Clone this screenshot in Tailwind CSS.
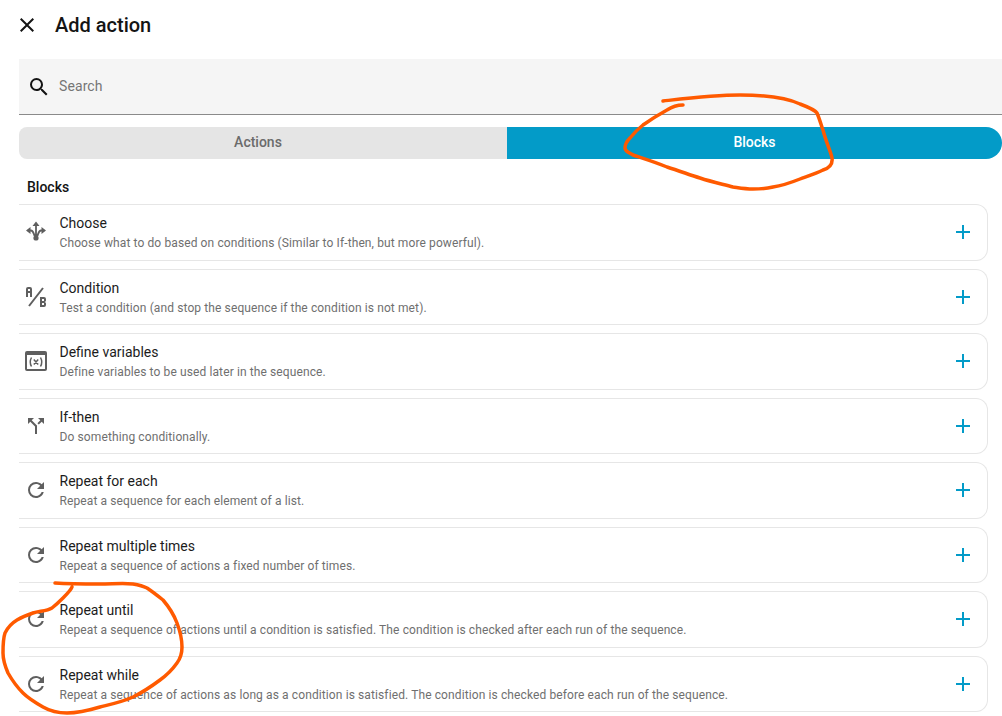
<!DOCTYPE html>
<html>

<head>
    <meta charset="UTF-8" />
    <title>Add action</title>
    <script src="https://cdn.jsdelivr.net/npm/@tailwindcss/browser@4"></script>
</head>

<body class="bg-white font-['Roboto',sans-serif] overflow-hidden">
    <div class="relative w-[1002px] h-[716px] overflow-hidden">
        <!-- header -->
        <div class="flex items-center h-[49px] pl-[15px]">
            <svg class="w-6 h-6 text-[#141414]" viewBox="0 0 24 24" fill="currentColor"><path d="M19,6.41L17.59,5L12,10.59L6.41,5L5,6.41L10.59,12L5,17.59L6.41,19L12,13.41L17.59,19L19,17.59L13.41,12L19,6.41Z" /></svg>
            <h1 class="ml-4 text-[20px] font-medium text-[#141414]">Add action</h1>
        </div>

        <div class="pl-[19px]">
            <!-- search -->
            <div class="flex items-center h-[56px] mt-[10px] bg-[#f5f5f5] border-b border-[#8a8a8a] pl-2">
                <svg class="w-6 h-6 text-[#141414]" viewBox="0 0 24 24" fill="currentColor"><path d="M9.5,3A6.5,6.5 0 0,1 16,9.5C16,11.11 15.41,12.59 14.44,13.73L14.71,14H15.5L20.5,19L19,20.5L14,15.5V14.71L13.73,14.44C12.59,15.41 11.11,16 9.5,16A6.5,6.5 0 0,1 3,9.5A6.5,6.5 0 0,1 9.5,3M9.5,5C7,5 5,7 5,9.5C5,12 7,14 9.5,14C12,14 14,12 14,9.5C14,7 12,5 9.5,5Z" /></svg>
                <span class="ml-2 mb-[2px] text-sm tracking-[0.1px] text-[#757575]">Search</span>
            </div>

            <!-- tabs -->
            <div class="flex h-8 mt-3 text-sm font-medium">
                <div class="w-[488px] flex items-center justify-center pb-[2px] pr-[10px] bg-[#e5e5e5] text-[#6b6b6b] rounded-l-lg">Actions</div>
                <div class="flex-1 flex items-center justify-center pb-[2px] bg-[#039bc8] text-white rounded-r-2xl">Blocks</div>
            </div>

            <h2 class="mt-[20px] ml-2 h-[17px] leading-[17px] text-sm font-medium text-[#141414]">Blocks</h2>

            <!-- rows -->
            <div class="mt-[8px] w-[969px] flex flex-col gap-2">
                <div class="flex items-center h-[56.5px] border-y border-r border-[#e6e6e6] rounded-r-xl">
                    <svg class="w-6 h-6 ml-[5px] text-[#5f5f5f]" viewBox="0 0 24 24" fill="currentColor"><path d="M12 1.5L15.5 6H8.5ZM2 10.5L6.5 7V14ZM22 10.5L17.5 7V14Z" /><circle cx="12" cy="18" r="2.6" /><path d="M12 5V16M5 10.5H7C9.5 10.5 9.5 14 11 16.5M19 10.5H17C14.5 10.5 14.5 14 13 16.5" fill="none" stroke="currentColor" stroke-width="1.8" /></svg>
                    <div class="ml-[11.5px] flex-1">
                        <div class="text-sm leading-5 text-[#1c1c1c]">Choose</div>
                        <div class="mt-[2px] text-xs leading-4 tracking-[0.11px] text-[#6f6f6f]">Choose what to do based on conditions (Similar to If-then, but more powerful).</div>
                    </div>
                    <svg class="w-6 h-6 mr-3 text-[#039bc8]" viewBox="0 0 24 24" fill="currentColor"><path d="M19,13H13V19H11V13H5V11H11V5H13V11H19V13Z" /></svg>
                </div>
                <div class="flex items-center h-[56.5px] border-y border-r border-[#e6e6e6] rounded-r-xl">
                    <svg class="w-6 h-6 ml-[5px] text-[#5f5f5f]" viewBox="0 0 24 24" fill="currentColor"><path d="M4 2A2 2 0 0 0 2 4V12H4V8H6V12H8V4A2 2 0 0 0 6 2H4M4 4H6V6H4M22 15.5V14A2 2 0 0 0 20 12H16V22H20A2 2 0 0 0 22 20V18.5A1.54 1.54 0 0 0 20.5 17A1.54 1.54 0 0 0 22 15.5M20 20H18V18H20V20M20 16H18V14H20M5.79 21.61L4.21 20.39L18.21 2.39L19.79 3.61Z" /></svg>
                    <div class="ml-[11.5px] flex-1">
                        <div class="text-sm leading-5 text-[#1c1c1c]">Condition</div>
                        <div class="mt-[2px] text-xs leading-4 tracking-[0.11px] text-[#6f6f6f]">Test a condition (and stop the sequence if the condition is not met).</div>
                    </div>
                    <svg class="w-6 h-6 mr-3 text-[#039bc8]" viewBox="0 0 24 24" fill="currentColor"><path d="M19,13H13V19H11V13H5V11H11V5H13V11H19V13Z" /></svg>
                </div>
                <div class="flex items-center h-[56.5px] border-y border-r border-[#e6e6e6] rounded-r-xl">
                    <svg class="w-6 h-6 ml-[5px] text-[#5f5f5f]" viewBox="0 0 24 24" fill="currentColor"><path fill-rule="evenodd" d="M3 2H21A2 2 0 0 1 23 4V20A2 2 0 0 1 21 22H3A2 2 0 0 1 1 20V4A2 2 0 0 1 3 2M3 6V20H21V6Z" /><path d="M7.5 8.5Q5 13 7.5 17.5M16.5 8.5Q19 13 16.5 17.5M9.8 10.5L14.2 15.5M14.2 10.5L9.8 15.5" fill="none" stroke="currentColor" stroke-width="1.5" /></svg>
                    <div class="ml-[11.5px] flex-1">
                        <div class="text-sm leading-5 text-[#1c1c1c]">Define variables</div>
                        <div class="mt-[2px] text-xs leading-4 tracking-[0.11px] text-[#6f6f6f]">Define variables to be used later in the sequence.</div>
                    </div>
                    <svg class="w-6 h-6 mr-3 text-[#039bc8]" viewBox="0 0 24 24" fill="currentColor"><path d="M19,13H13V19H11V13H5V11H11V5H13V11H19V13Z" /></svg>
                </div>
                <div class="flex items-center h-[56.5px] border-y border-r border-[#e6e6e6] rounded-r-xl">
                    <svg class="w-6 h-6 ml-[5px] text-[#5f5f5f]" viewBox="0 0 24 24" fill="currentColor"><path d="M14,4L16.29,6.29L13.41,9.17L14.83,10.59L17.71,7.71L20,10V4M10,4H4V10L6.29,7.71L11,12.41V20H13V11.59L7.71,6.29" /></svg>
                    <div class="ml-[11.5px] flex-1">
                        <div class="text-sm leading-5 text-[#1c1c1c]">If-then</div>
                        <div class="mt-[2px] text-xs leading-4 tracking-[0.11px] text-[#6f6f6f]">Do something conditionally.</div>
                    </div>
                    <svg class="w-6 h-6 mr-3 text-[#039bc8]" viewBox="0 0 24 24" fill="currentColor"><path d="M19,13H13V19H11V13H5V11H11V5H13V11H19V13Z" /></svg>
                </div>
                <div class="flex items-center h-[56.5px] border-y border-r border-[#e6e6e6] rounded-r-xl">
                    <svg class="w-6 h-6 ml-[5px] text-[#5f5f5f]" viewBox="0 0 24 24" fill="currentColor"><path d="M17.65,6.35C16.2,4.9 14.21,4 12,4A8,8 0 0,0 4,12A8,8 0 0,0 12,20C15.73,20 18.84,17.45 19.73,14H17.65C16.83,16.33 14.61,18 12,18A6,6 0 0,1 6,12A6,6 0 0,1 12,6C13.66,6 15.14,6.69 16.22,7.78L13,11H20V4L17.65,6.35Z" /></svg>
                    <div class="ml-[11.5px] flex-1">
                        <div class="text-sm leading-5 text-[#1c1c1c]">Repeat for each</div>
                        <div class="mt-[2px] text-xs leading-4 tracking-[0.11px] text-[#6f6f6f]">Repeat a sequence for each element of a list.</div>
                    </div>
                    <svg class="w-6 h-6 mr-3 text-[#039bc8]" viewBox="0 0 24 24" fill="currentColor"><path d="M19,13H13V19H11V13H5V11H11V5H13V11H19V13Z" /></svg>
                </div>
                <div class="flex items-center h-[56.5px] border-y border-r border-[#e6e6e6] rounded-r-xl">
                    <svg class="w-6 h-6 ml-[5px] text-[#5f5f5f]" viewBox="0 0 24 24" fill="currentColor"><path d="M17.65,6.35C16.2,4.9 14.21,4 12,4A8,8 0 0,0 4,12A8,8 0 0,0 12,20C15.73,20 18.84,17.45 19.73,14H17.65C16.83,16.33 14.61,18 12,18A6,6 0 0,1 6,12A6,6 0 0,1 12,6C13.66,6 15.14,6.69 16.22,7.78L13,11H20V4L17.65,6.35Z" /></svg>
                    <div class="ml-[11.5px] flex-1">
                        <div class="text-sm leading-5 text-[#1c1c1c]">Repeat multiple times</div>
                        <div class="mt-[2px] text-xs leading-4 tracking-[0.11px] text-[#6f6f6f]">Repeat a sequence of actions a fixed number of times.</div>
                    </div>
                    <svg class="w-6 h-6 mr-3 text-[#039bc8]" viewBox="0 0 24 24" fill="currentColor"><path d="M19,13H13V19H11V13H5V11H11V5H13V11H19V13Z" /></svg>
                </div>
                <div class="flex items-center h-[56.5px] border-y border-r border-[#e6e6e6] rounded-r-xl">
                    <svg class="w-6 h-6 ml-[5px] text-[#5f5f5f]" viewBox="0 0 24 24" fill="currentColor"><path d="M17.65,6.35C16.2,4.9 14.21,4 12,4A8,8 0 0,0 4,12A8,8 0 0,0 12,20C15.73,20 18.84,17.45 19.73,14H17.65C16.83,16.33 14.61,18 12,18A6,6 0 0,1 6,12A6,6 0 0,1 12,6C13.66,6 15.14,6.69 16.22,7.78L13,11H20V4L17.65,6.35Z" /></svg>
                    <div class="ml-[11.5px] flex-1">
                        <div class="text-sm leading-5 text-[#1c1c1c]">Repeat until</div>
                        <div class="mt-[2px] text-xs leading-4 tracking-[0.11px] text-[#6f6f6f]">Repeat a sequence of actions until a condition is satisfied. The condition is checked after each run of the sequence.</div>
                    </div>
                    <svg class="w-6 h-6 mr-3 text-[#039bc8]" viewBox="0 0 24 24" fill="currentColor"><path d="M19,13H13V19H11V13H5V11H11V5H13V11H19V13Z" /></svg>
                </div>
                <div class="flex items-center h-[56.5px] border-y border-r border-[#e6e6e6] rounded-r-xl">
                    <svg class="w-6 h-6 ml-[5px] text-[#5f5f5f]" viewBox="0 0 24 24" fill="currentColor"><path d="M17.65,6.35C16.2,4.9 14.21,4 12,4A8,8 0 0,0 4,12A8,8 0 0,0 12,20C15.73,20 18.84,17.45 19.73,14H17.65C16.83,16.33 14.61,18 12,18A6,6 0 0,1 6,12A6,6 0 0,1 12,6C13.66,6 15.14,6.69 16.22,7.78L13,11H20V4L17.65,6.35Z" /></svg>
                    <div class="ml-[11.5px] flex-1">
                        <div class="text-sm leading-5 text-[#1c1c1c]">Repeat while</div>
                        <div class="mt-[2px] text-xs leading-4 tracking-[0.11px] text-[#6f6f6f]">Repeat a sequence of actions as long as a condition is satisfied. The condition is checked before each run of the sequence.</div>
                    </div>
                    <svg class="w-6 h-6 mr-3 text-[#039bc8]" viewBox="0 0 24 24" fill="currentColor"><path d="M19,13H13V19H11V13H5V11H11V5H13V11H19V13Z" /></svg>
                </div>
            </div>
        </div>

        <!-- hand drawn marks on top of the screenshot -->
        <svg class="absolute inset-0 w-[1002px] h-[716px] pointer-events-none" viewBox="0 0 1002 716" fill="none" stroke="#ff5a00" stroke-width="3.5" stroke-linecap="round" stroke-linejoin="round">
            <path d="M663 101C690 98 715 95 740 95C760 95 785 97 800 104C808 107 815 110 817 113C820 120 822 128 823 130C826 142 831 152 832 158C833 165 829 168 823 170C815 174 805 177 800 179C790 183 780 186 773 187C765 189 760 189 753 189C745 189 740 188 733 187C722 184 712 182 700 178C690 175 680 171 667 167C655 162 645 159 633 155C628 152 625 151 625 148C625 145 627 141 630 138C634 133 638 129 643 125C650 120 658 115 667 110C673 106 677 105 683 105" />
            <path d="M55 583C70 584 85 584 100 584C112 584 124 583 133 584C139 585 143 586 147 588C153 592 158 596 163 600C169 607 174 615 177 623C180 631 182 640 182 647C182 653 180 659 177 663C172 670 167 675 160 680C152 686 143 692 133 697C122 702 112 704 100 707C90 710 78 713 67 713C58 713 50 711 43 707C36 703 29 699 23 693C17 687 12 680 8 673C5 666 3 660 3 653C3 646 3 639 5 633C8 627 12 623 17 620C22 617 27 615 33 613C40 611 47 611 52 608C57 604 60 601 63 598C67 594 71 590 72 587" />
        </svg>
    </div>
</body>

</html>
